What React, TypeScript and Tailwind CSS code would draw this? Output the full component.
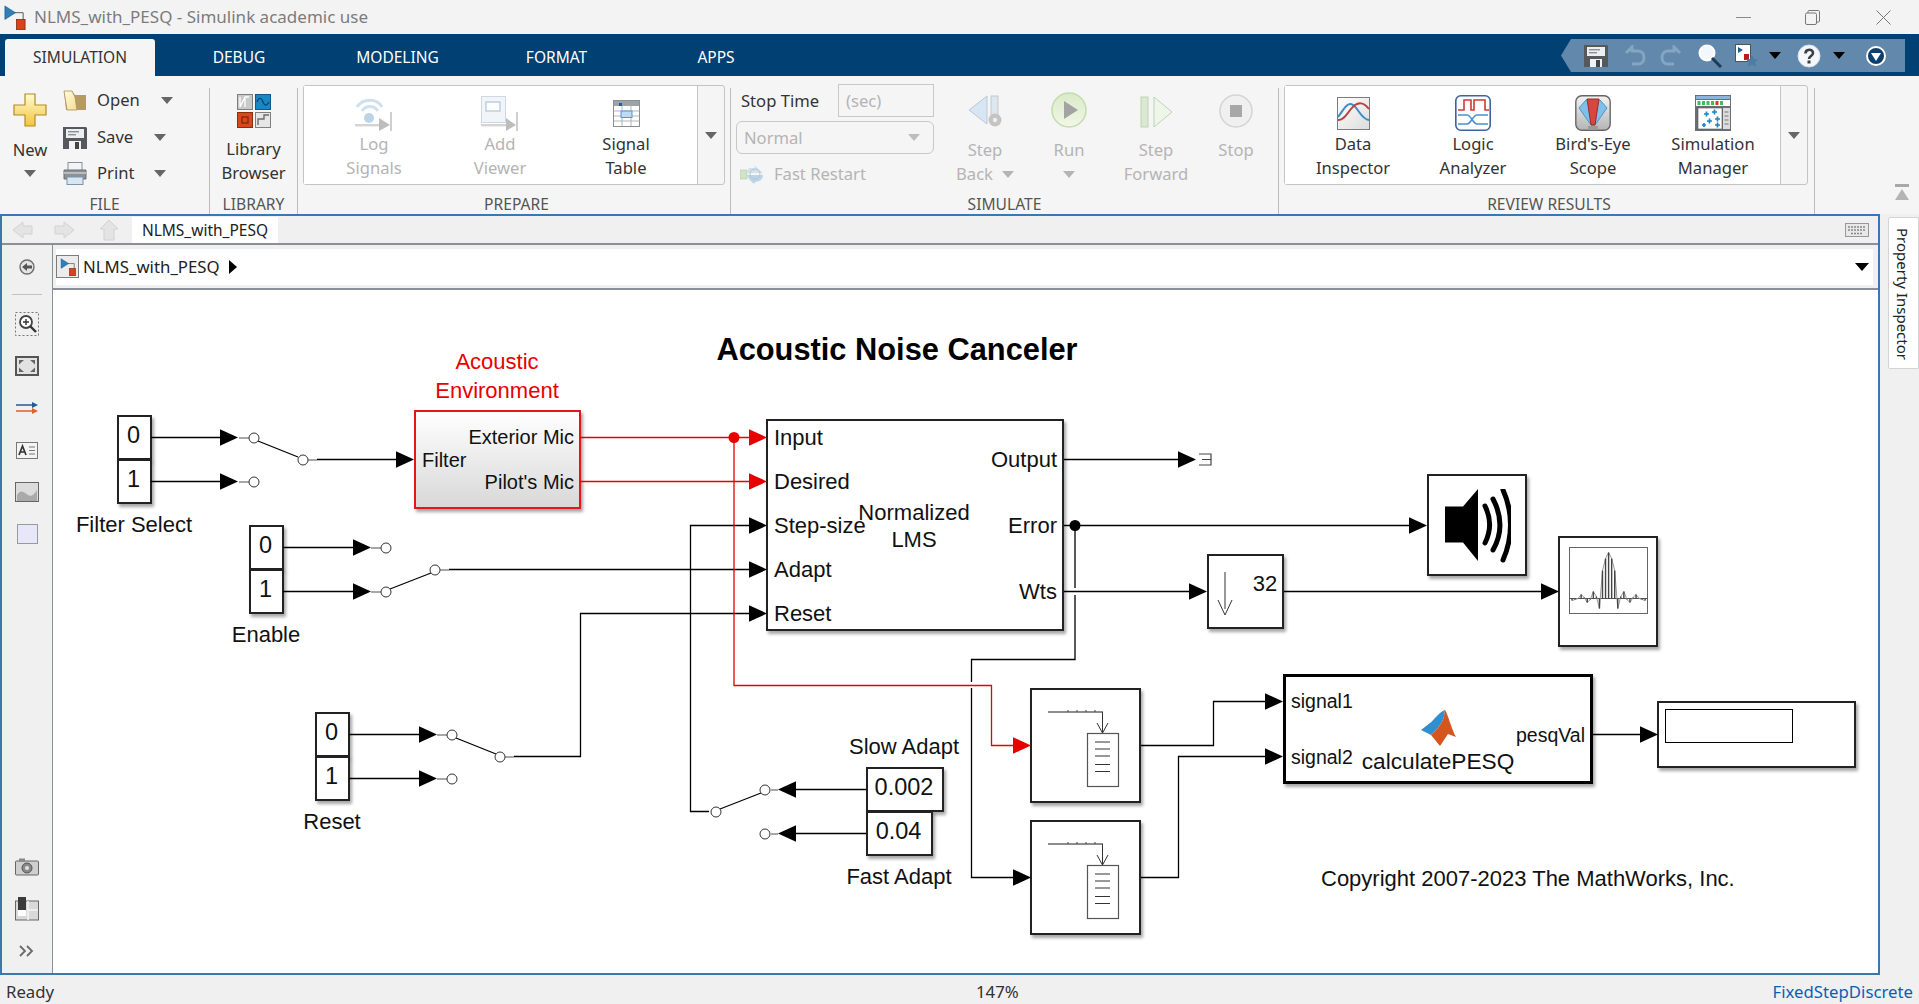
import type { ReactNode } from "react";

// little triangle used on all the ribbon drop downs
function Caret({ className = "" }: { className?: string }) {
  return (
    <svg width="12" height="7" viewBox="0 0 12 7" className={className}>
      <path d="M0 0h12L6 7z" fill="currentColor" />
    </svg>
  );
}

function ModelIcon({ size = 24 }: { size?: number }) {
  return (
    <svg width={size} height={size} viewBox="0 0 24 26">
      <path d="M8 8 L21 8 L21 18" fill="none" stroke="#555" strokeWidth="1" />
      <path d="M2 1 L13 8 L2 15 z" fill="#2f7fb8" stroke="#14507c" strokeWidth="0.6" />
      <rect x="14" y="15" width="9" height="11" fill="#d9421d" stroke="#7c2710" strokeWidth="0.8" />
    </svg>
  );
}

function NewIcon() {
  return (
    <svg width="34" height="34" viewBox="0 0 34 34">
      <defs>
        <linearGradient id="plusFill" x1="0" y1="0" x2="0" y2="1">
          <stop offset="0" stopColor="#fffbd0" />
          <stop offset="1" stopColor="#f2c53d" />
        </linearGradient>
      </defs>
      <path d="M12 1h10v11h11v10H22v11H12V22H1V12h11z" fill="url(#plusFill)" stroke="#b08b2c" strokeWidth="1.2" />
    </svg>
  );
}

function FolderIcon() {
  return (
    <svg width="24" height="21" viewBox="0 0 24 21">
      <defs>
        <linearGradient id="folderFill" x1="0" y1="0" x2="1" y2="1">
          <stop offset="0" stopColor="#fffde0" />
          <stop offset="1" stopColor="#f3dc90" />
        </linearGradient>
      </defs>
      <path d="M1 1h8l3 4h11v15H3z" fill="#b59a63" />
      <path d="M1 1h8l3 6 2 13H4z" fill="url(#folderFill)" stroke="#a98f5a" strokeWidth="0.8" />
    </svg>
  );
}

function FloppyIcon({ w = 24, h = 23 }: { w?: number; h?: number }) {
  return (
    <svg width={w} height={h} viewBox="0 0 24 23">
      <path d="M0 1h23l1 1v21H0z" fill="#55585c" />
      <rect x="3" y="3" width="18" height="9" fill="#eceff2" />
      <rect x="5" y="5" width="11" height="1.4" fill="#8c9096" />
      <rect x="5" y="8" width="8" height="1.4" fill="#8c9096" />
      <rect x="6" y="15" width="12" height="8" fill="#f2f2f2" />
      <rect x="12" y="16" width="4" height="7" fill="#444" />
    </svg>
  );
}

function PrinterIcon() {
  return (
    <svg width="24" height="23" viewBox="0 0 24 23">
      <rect x="5" y="0.5" width="14" height="8" fill="#f2f4f6" stroke="#8a8f95" />
      <path d="M1 8h22v9H1z" fill="#8b9197" stroke="#6c7176" />
      <rect x="1" y="10" width="22" height="2" fill="#b7bcc1" />
      <rect x="4" y="15" width="16" height="7.5" fill="#d7e6f2" stroke="#7d95a8" />
    </svg>
  );
}

function LibraryIcon() {
  return (
    <svg width="34" height="34" viewBox="0 0 34 34">
      <rect x="0.5" y="0.5" width="15" height="15" fill="#c9c9c9" stroke="#7f7f7f" />
      <path d="M3 13V3M3 13l5-10M8 13V3l4 0" fill="none" stroke="#fff" strokeWidth="1.3" />
      <rect x="18.5" y="0.5" width="15" height="15" fill="#1b86c4" stroke="#11598a" />
      <path d="M20 8c2-5 4-5 6 0s4 3 6 0" fill="none" stroke="#0a3f63" strokeWidth="1.2" />
      <rect x="0.5" y="18.5" width="15" height="15" fill="#d8481c" stroke="#8e2c0e" />
      <rect x="5" y="23" width="6" height="6" fill="none" stroke="#7d2408" strokeWidth="1.2" />
      <rect x="18.5" y="18.5" width="15" height="15" fill="#e6e6e6" stroke="#7f7f7f" />
      <path d="M21 31v-6h6v-4h5" fill="none" stroke="#6c6c6c" strokeWidth="1.4" />
    </svg>
  );
}

function LogSignalsIcon() {
  return (
    <svg width="38" height="35" viewBox="0 0 38 35">
      <path d="M2 11C8 2 22 2 27 11" fill="none" stroke="#cfe0ee" strokeWidth="3" />
      <path d="M7 15C11 9 19 9 23 15" fill="none" stroke="#cfe0ee" strokeWidth="3" />
      <circle cx="14" cy="22" r="5" fill="#bcd4e8" />
      <rect x="0" y="28" width="26" height="2.4" fill="#d4d4d4" />
      <path d="M24 22l11 7-11 6z" fill="#bdbdbd" />
      <rect x="35" y="16" width="2" height="19" fill="#cfcfcf" />
    </svg>
  );
}

function AddViewerIcon() {
  return (
    <svg width="38" height="35" viewBox="0 0 38 35">
      <rect x="0.5" y="0.5" width="24" height="26" fill="#f1f5f9" stroke="#cfd8e0" />
      <rect x="5" y="6" width="14" height="9" fill="#fff" stroke="#b8cde0" strokeWidth="1.4" />
      <rect x="0" y="28" width="26" height="2.4" fill="#d4d4d4" />
      <path d="M25 22l10 7-10 6z" fill="#bdbdbd" />
      <rect x="35" y="16" width="2" height="19" fill="#cfcfcf" />
    </svg>
  );
}

function SignalTableIcon() {
  return (
    <svg width="27" height="27" viewBox="0 0 27 27">
      <rect x="0.5" y="0.5" width="26" height="26" fill="#fff" stroke="#8b8f94" />
      <rect x="1" y="1" width="25" height="5" fill="#9ea3a8" />
      <rect x="6" y="3" width="3" height="3" fill="#1a5fa8" />
      <path d="M1 11h25M1 16h25M1 21h25M9 6v20M18 6v20" stroke="#a9adb2" strokeWidth="0.9" />
      <rect x="8" y="11" width="11" height="6.5" fill="#bcd9f5" stroke="#5c94cc" />
    </svg>
  );
}

function FastRestartIcon() {
  return (
    <svg width="24" height="20" viewBox="0 0 24 20">
      <rect x="0" y="6" width="7" height="9" fill="#cfe3c8" stroke="#b7c9b1" strokeWidth="0.6" />
      <path d="M9 4h6l-1-3 9 8H7z" fill="#cfe0ee" />
      <path d="M7 11h16c0 6-6 7-8 7l-1 2-5-5z" fill="#bcd4e8" />
      <circle cx="15" cy="10" r="5" fill="none" stroke="#b8c4cd" strokeWidth="1" />
    </svg>
  );
}

function StepBackIcon() {
  return (
    <svg width="35" height="33" viewBox="0 0 35 33">
      <path d="M19 1v28L1 15z" fill="#d7e6f2" stroke="#b9c9d6" />
      <rect x="23" y="1" width="7" height="26" fill="#dfe7ee" stroke="#c2c9d0" />
      <circle cx="27" cy="25" r="6.5" fill="#c4c4c4" />
      <circle cx="27" cy="25" r="2.2" fill="#efefef" />
    </svg>
  );
}

function RunIcon() {
  return (
    <svg width="36" height="36" viewBox="0 0 36 36">
      <defs>
        <linearGradient id="runFill" x1="0" y1="0" x2="0" y2="1">
          <stop offset="0" stopColor="#d9eac8" />
          <stop offset="1" stopColor="#f1f7e8" />
        </linearGradient>
      </defs>
      <circle cx="18" cy="18" r="17" fill="url(#runFill)" stroke="#c4dcb0" strokeWidth="1.5" />
      <path d="M13 9l14 9-14 9z" fill="#a3a3a3" />
    </svg>
  );
}

function StepForwardIcon() {
  return (
    <svg width="33" height="33" viewBox="0 0 33 33">
      <rect x="1" y="2" width="7" height="30" fill="#dbe9d3" stroke="#bfd2b4" />
      <path d="M14 2v30l18-15z" fill="#eef5e9" stroke="#bfd2b4" />
    </svg>
  );
}

function StopIcon() {
  return (
    <svg width="34" height="34" viewBox="0 0 34 34">
      <circle cx="17" cy="17" r="16" fill="#f0f0f0" stroke="#d4d4d4" strokeWidth="1.5" />
      <rect x="11" y="11" width="12" height="12" fill="#a8a8a8" />
    </svg>
  );
}

function DataInspectorIcon() {
  return (
    <svg width="33" height="33" viewBox="0 0 33 33">
      <defs>
        <linearGradient id="sdiFill" x1="0" y1="0" x2="1" y2="1">
          <stop offset="0" stopColor="#ffffff" />
          <stop offset="1" stopColor="#dcdcdc" />
        </linearGradient>
      </defs>
      <rect x="0.5" y="0.5" width="32" height="32" fill="url(#sdiFill)" stroke="#7d7d7d" />
      <path d="M1 20C6 14 10 4 16 8s8 14 16 15" fill="none" stroke="#3d8ccc" strokeWidth="2" />
      <path d="M1 23C8 24 12 12 18 8s10-1 14 4" fill="none" stroke="#b9413b" strokeWidth="2" />
    </svg>
  );
}

function LogicAnalyzerIcon() {
  return (
    <svg width="36" height="36" viewBox="0 0 36 36">
      <rect x="0.8" y="0.8" width="34.4" height="34.4" rx="5" fill="#fff" stroke="#3b659a" strokeWidth="1.6" />
      <path d="M3 15h6V5h7v10h3V5h11v10h4" fill="none" stroke="#cf3a34" strokeWidth="1.6" />
      <path d="M3 20h9c4 0 6 9 10 9h11M3 29h9c4 0 6-9 10-9h11" fill="none" stroke="#4a90cf" strokeWidth="1.6" />
    </svg>
  );
}

function BirdsEyeIcon() {
  return (
    <svg width="36" height="36" viewBox="0 0 36 36">
      <defs>
        <linearGradient id="beFill" x1="0" y1="0" x2="0" y2="1">
          <stop offset="0" stopColor="#f2f2f2" />
          <stop offset="1" stopColor="#b5b5b5" />
        </linearGradient>
      </defs>
      <rect x="0.8" y="0.8" width="34.4" height="34.4" rx="6" fill="url(#beFill)" stroke="#666" strokeWidth="1.4" />
      <path d="M4 13L11 5 25 5 32 13 20 30H16z" fill="#7fc0ea" stroke="#4f93c4" />
      <path d="M12 4h12l-4 26h-4z" fill="#d5473f" stroke="#9a2c27" />
      <path d="M13 31h10v4H13z" fill="#9b9b9b" />
    </svg>
  );
}

function SimManagerIcon() {
  return (
    <svg width="36" height="36" viewBox="0 0 36 36">
      <rect x="0" y="0" width="36" height="36" fill="#6b6f74" />
      <rect x="1" y="1" width="34" height="3" fill="#8db3d6" />
      <rect x="1" y="5" width="34" height="6" fill="#fff" />
      <g fill="#3fc04d">
        <rect x="2.5" y="6" width="3" height="4" />
        <rect x="7" y="6" width="3" height="4" />
        <rect x="11.5" y="6" width="3" height="4" />
        <rect x="16" y="6" width="3" height="4" />
        <rect x="25" y="6" width="3" height="4" />
      </g>
      <rect x="20.5" y="6" width="3" height="4" fill="#e2332b" />
      <rect x="3" y="13" width="24" height="21" fill="#fff" stroke="#555" strokeWidth="0.6" />
      <rect x="28" y="13" width="7" height="21" fill="#dcdcdc" />
      <path d="M9 19h5M11.500 16.500v5M17 17h5M19.500 14.500v5M12 26h5M14.500 23.500v5M20 24h5M22.500 21.500v5M7 30h4M9 28v4M20 30h5M22.500 27.500v5" stroke="#1b86c4" strokeWidth="1.7" />
      <path d="M29.500 17h4M29.500 21h4M29.500 25h4M29.500 29h4" stroke="#777" strokeWidth="1.2" />
    </svg>
  );
}

function MagnifierIcon() {
  return (
    <svg width="24" height="24" viewBox="0 0 24 24">
      <circle cx="9" cy="9" r="7.500" fill="#f3f8fc" stroke="#fff" strokeWidth="2" />
      <path d="M14 14l9 9" stroke="#1d3a57" strokeWidth="3" />
    </svg>
  );
}

function RibbonButton({ icon, lines, disabled, tall }: { icon: ReactNode; lines: ReactNode[]; disabled?: boolean; tall?: boolean }) {
  return (
    <div className={`flex flex-col items-center ${disabled ? "text-[#b4b4b4]" : "text-[#333333]"}`}>
      <div className={`${tall ? "mt-[8px]" : "mt-[9px]"} flex h-[36px] items-center justify-center`}>{icon}</div>
      <div className={`${tall ? "mt-[8px]" : "mt-[1px]"} text-center text-[16.600px] leading-[24px] whitespace-nowrap`}>
        {lines.map((l, i) => (
          <div key={i}>{l}</div>
        ))}
      </div>
    </div>
  );
}

function GroupLabel({ children }: { children: ReactNode }) {
  return <div className="flex h-[29px] items-center justify-center pt-[10px] text-[15.600px] text-[#555555]">{children}</div>;
}

function Sep() {
  return <div className="mt-[3px] w-px bg-[#bcbcbc]" />;
}

function Ribbon() {
  return (
    <div className="flex h-[138px] bg-[#f5f5f5] pt-[9px]">
      {/* File */}
      <div className="w-[209px]">
        <div className="flex h-[100px] text-[#333333]">
          <div className="flex w-[60px] flex-col items-center">
            <div className="mt-[8px]"><NewIcon /></div>
            <div className="mt-[11px] text-[16.600px] leading-[24px]">New</div>
            <Caret className="mt-[8px] text-[#666666]" />
          </div>
          <div className="flex w-[149px] flex-col pl-[3px] text-[16.600px] leading-[24px]">
            <div className="mt-[3px] flex h-[24px] items-center">
              <FolderIcon />
              <span className="ml-[10px] w-[64px]">Open</span>
              <Caret className="text-[#666666]" />
            </div>
            <div className="mt-[13px] flex h-[24px] items-center">
              <FloppyIcon />
              <span className="ml-[10px] w-[57px]">Save</span>
              <Caret className="text-[#666666]" />
            </div>
            <div className="mt-[12px] flex h-[24px] items-center">
              <PrinterIcon />
              <span className="ml-[10px] w-[57px]">Print</span>
              <Caret className="text-[#666666]" />
            </div>
          </div>
        </div>
        <GroupLabel>FILE</GroupLabel>
      </div>
      <Sep />
      {/* Library */}
      <div className="w-[87px]">
        <div className="h-[100px]">
          <RibbonButton tall icon={<LibraryIcon />} lines={["Library", "Browser"]} />
        </div>
        <GroupLabel>LIBRARY</GroupLabel>
      </div>
      <Sep />
      {/* Prepare */}
      <div className="w-[432px] pl-[5px]">
        <div className="flex h-[100px] w-[422px] rounded-[3px] border border-[#c4c4c4]">
          <div className="flex flex-1 bg-white pl-[7px]">
            <div className="w-[126px]"><RibbonButton disabled icon={<LogSignalsIcon />} lines={["Log", "Signals"]} /></div>
            <div className="w-[126px]"><RibbonButton disabled icon={<AddViewerIcon />} lines={["Add", "Viewer"]} /></div>
            <div className="w-[126px]"><RibbonButton icon={<SignalTableIcon />} lines={["Signal", "Table"]} /></div>
          </div>
          <div className="flex w-[27px] items-center justify-center border-l border-[#c4c4c4] text-[#666666]"><Caret /></div>
        </div>
        <GroupLabel>PREPARE</GroupLabel>
      </div>
      <Sep />
      {/* Simulate */}
      <div className="w-[547px]">
        <div className="flex h-[100px] pl-[5px]">
          <div className="w-[198px] text-[16.600px] leading-[24px] text-[#b4b4b4]">
            <div className="mt-[-1px] flex h-[33px] items-center justify-between">
              <span className="pl-[5px] text-[#333333]">Stop Time</span>
              <div className="h-[33px] w-[96px] border border-[#c8c8c8] pl-[7px] leading-[31px]">(sec)</div>
            </div>
            <div className="mt-[4px] flex h-[33px] items-center justify-between rounded-[6px] border border-[#c8c8c8] pr-[13px] pl-[7px]">
              Normal
              <Caret className="text-[#bdbdbd]" />
            </div>
            <div className="mt-[8px] flex h-[24px] items-center pl-[4px]">
              <FastRestartIcon />
              <span className="ml-[10px]">Fast Restart</span>
            </div>
          </div>
          <div className="w-[6px]" />
          <div className="w-[90px]">
            <div className="flex flex-col items-center text-[#b4b4b4]">
              <div className="mt-[10px] flex h-[33px] items-center"><StepBackIcon /></div>
              <div className="mt-[10px] text-center text-[16.600px] leading-[24px]">
                <div>Step</div>
                <div className="flex items-center">
                  Back
                  <Caret className="ml-[9px] text-[#b4b4b4]" />
                </div>
              </div>
            </div>
          </div>
          <div className="w-[78px]">
            <div className="flex flex-col items-center text-[#b4b4b4]">
              <div className="mt-[7px] flex h-[36px] items-center"><RunIcon /></div>
              <div className="mt-[10px] text-center text-[16.600px] leading-[24px]">Run</div>
              <Caret className="mt-[9px]" />
            </div>
          </div>
          <div className="w-[96px]">
            <div className="flex flex-col items-center text-[#b4b4b4]">
              <div className="mt-[10px] flex h-[33px] items-center"><StepForwardIcon /></div>
              <div className="mt-[10px] text-center text-[16.600px] leading-[24px]">
                <div>Step</div>
                <div>Forward</div>
              </div>
            </div>
          </div>
          <div className="w-[64px]">
            <div className="flex flex-col items-center text-[#b4b4b4]">
              <div className="mt-[8px] flex h-[35px] items-center"><StopIcon /></div>
              <div className="mt-[10px] text-[16.600px] leading-[24px]">Stop</div>
            </div>
          </div>
        </div>
        <GroupLabel>SIMULATE</GroupLabel>
      </div>
      <Sep />
      {/* Review results */}
      <div className="w-[535px] pl-[5px]">
        <div className="flex h-[100px] w-[524px] rounded-[3px] border border-[#c4c4c4]">
          <div className="flex flex-1 bg-white pl-[8px]">
            <div className="w-[120px]"><RibbonButton icon={<DataInspectorIcon />} lines={["Data", "Inspector"]} /></div>
            <div className="w-[120px]"><RibbonButton icon={<LogicAnalyzerIcon />} lines={["Logic", "Analyzer"]} /></div>
            <div className="w-[120px]"><RibbonButton icon={<BirdsEyeIcon />} lines={["Bird's-Eye", "Scope"]} /></div>
            <div className="w-[120px]"><RibbonButton icon={<SimManagerIcon />} lines={["Simulation", "Manager"]} /></div>
          </div>
          <div className="flex w-[27px] items-center justify-center border-l border-[#c4c4c4] text-[#666666]"><Caret /></div>
        </div>
        <GroupLabel>REVIEW RESULTS</GroupLabel>
      </div>
      <Sep />
      <div className="flex flex-1 justify-end pt-[99px] pr-[10px]">
        <svg width="14" height="17" viewBox="0 0 14 17">
          <rect x="0" y="0" width="14" height="3" fill="#a8a8a8" />
          <path d="M7 5l7 11H0z" fill="#b4b4b4" />
        </svg>
      </div>
    </div>
  );
}

function QuickAccess() {
  return (
    <div className="mt-[5px] mr-[14px] ml-auto flex h-[33px] w-[344px] items-center bg-[#6288ab] [clip-path:polygon(10px_0,100%_0,100%_100%,10px_100%,0_50%)]">
      <div className="ml-[23px]"><FloppyIcon /></div>
      <svg width="22" height="22" viewBox="0 0 22 22" className="ml-[16px]">
        <path d="M2 8l6-6v4h6c8 0 8 13 0 13H8" fill="none" stroke="#84a6c4" strokeWidth="3" />
      </svg>
      <svg width="22" height="22" viewBox="0 0 22 22" className="ml-[14px]">
        <path d="M20 8l-6-6v4H8C0 6 0 19 8 19h6" fill="none" stroke="#84a6c4" strokeWidth="3" />
      </svg>
      <div className="ml-[16px]"><MagnifierIcon /></div>
      <svg width="24" height="24" viewBox="0 0 24 24" className="ml-[13px]">
        <rect x="0.500" y="0.500" width="15" height="17" fill="#fff" stroke="#4c5560" />
        <path d="M3 3l5 3-5 3z" fill="#1b5e92" />
        <rect x="9" y="10" width="5" height="6" fill="#b5201a" />
        <path d="M17 11l2 4 4 .5-3 3 1 4.500-4-2.500-4 2.500 1-4.500-3-3 4-.5z" fill="#4f7ca4" />
      </svg>
      <Caret className="ml-[10px] text-black" />
      <svg width="24" height="24" viewBox="0 0 24 24" className="ml-[16px]">
        <circle cx="12" cy="12" r="11" fill="#f5f8fb" stroke="#d4e0ea" />
        <path d="M8.500 9.500c0-5 7.500-5 7.500-.5 0 3-4 3-4 6" fill="none" stroke="#3b3f46" strokeWidth="2.600" />
        <rect x="10.500" y="16.500" width="3" height="3" fill="#3b3f46" />
      </svg>
      <Caret className="ml-[12px] text-black" />
      <svg width="20" height="20" viewBox="0 0 20 20" className="ml-[21px]">
        <circle cx="10" cy="10" r="9" fill="#0b3f6f" stroke="#fff" strokeWidth="2" />
        <path d="M5 7h10l-5 8z" fill="#fff" />
      </svg>
    </div>
  );
}

function SideSlot({ children }: { children: ReactNode }) {
  return <div className="flex h-[42px] items-center justify-center">{children}</div>;
}

function Sidebar() {
  return (
    <div className="flex w-[51px] flex-col border-r border-[#8a8f99]">
      <div className="flex h-[43px] items-center justify-center">
        <svg width="16" height="16" viewBox="0 0 16 16">
          <circle cx="8" cy="8" r="7" fill="#e4e4e4" stroke="#6d6d6d" strokeWidth="1.4" />
          <path d="M3 8l5-4v2.500h5v3H8V12z" fill="#555555" />
        </svg>
      </div>
      <div className="mx-auto mt-[6px] mb-[8px] h-px w-[30px] bg-[#c2c2c2]" />
      <SideSlot>
        <svg width="24" height="24" viewBox="0 0 24 24">
          <rect x="0.500" y="0.500" width="23" height="23" fill="none" stroke="#777" strokeDasharray="2 2" />
          <circle cx="11" cy="10" r="6" fill="#fff" stroke="#444" strokeWidth="1.8" />
          <path d="M8 10h6M11 7v6" stroke="#333" strokeWidth="1.4" />
          <path d="M15 14l6 6" stroke="#333" strokeWidth="2.400" />
        </svg>
      </SideSlot>
      <SideSlot>
        <svg width="24" height="20" viewBox="0 0 24 20">
          <rect x="1" y="1" width="22" height="18" fill="#e2e2e2" stroke="#555" strokeWidth="2" />
          <path d="M4 4h5L4 8.500zM20 4h-5l5 4.500zM4 16h5l-5-4.500zM20 16h-5l5-4.500z" fill="#666" />
        </svg>
      </SideSlot>
      <SideSlot>
        <svg width="22" height="12" viewBox="0 0 22 12">
          <path d="M0 3h17" stroke="#1f5c94" strokeWidth="1.500" />
          <path d="M16 0l6 3-6 3z" fill="#1f5c94" />
          <path d="M0 9h17" stroke="#d9652c" strokeWidth="1.500" />
          <path d="M16 6l6 3-6 3z" fill="#d9652c" />
        </svg>
      </SideSlot>
      <SideSlot>
        <svg width="22" height="17" viewBox="0 0 22 17">
          <rect x="0.500" y="0.500" width="21" height="16" fill="#f4f4f4" stroke="#777" />
          <path d="M3 13l3.500-9 3.500 9M4.500 10h4" fill="none" stroke="#333" strokeWidth="1.700" />
          <path d="M13 5h6M13 8.500h6M13 12h6" stroke="#777" />
        </svg>
      </SideSlot>
      <SideSlot>
        <svg width="24" height="20" viewBox="0 0 24 20">
          <rect x="0.500" y="0.500" width="23" height="19" fill="#dcdcdc" stroke="#666" />
          <path d="M2 13c4-7 8-2 11 0s6 0 9-5v11H2z" fill="#aaaaaa" />
        </svg>
      </SideSlot>
      <SideSlot>
        <div className="h-[20px] w-[21px] border border-[#9a9a9a] bg-[#e6e8fa]" />
      </SideSlot>
      <div className="mt-auto mb-px">
        <SideSlot>
          <svg width="24" height="18" viewBox="0 0 24 18">
            <rect x="0.500" y="3" width="23" height="14" rx="1" fill="#cfcfcf" stroke="#666" />
            <rect x="4" y="0.500" width="6" height="3" fill="#888" />
            <circle cx="12" cy="10" r="5" fill="#8a8a8a" stroke="#555" />
            <circle cx="12" cy="10" r="2" fill="#e2e2e2" />
          </svg>
        </SideSlot>
        <SideSlot>
          <svg width="24" height="24" viewBox="0 0 24 24">
            <rect x="0.500" y="4" width="23" height="19" fill="#d9d9d9" stroke="#666" />
            <path d="M13 13h10M13 4v19" stroke="#f3f3f3" strokeWidth="1.500" />
            <path d="M3 0h8v13H3z" fill="#3a3a3a" />
            <rect x="3" y="13" width="8" height="6" fill="#fff" />
          </svg>
        </SideSlot>
        <SideSlot>
          <svg width="16" height="12" viewBox="0 0 16 12">
            <path d="M1 1l5 5-5 5M8 1l5 5-5 5" fill="none" stroke="#6a6a6a" strokeWidth="1.800" />
          </svg>
        </SideSlot>
      </div>
    </div>
  );
}

function Arrow({ x, y, red, left }: { x: number; y: number; red?: boolean; left?: boolean }) {
  // x is the tip of the arrow head
  const base = left ? x + 18 : x - 18;
  return <path d={`M${x} ${y}L${base} ${y - 8.3}V${y + 8.3}z`} fill={red ? "#e60000" : "#000"} />;
}

function Port({ x, y }: { x: number; y: number }) {
  return <circle cx={x} cy={y} r="5" fill="#fff" stroke="#333" strokeWidth="1" />;
}

const blackWires = [
  "151,437.500 222,437.500",
  "151,481.500 222,481.500",
  "258,441 298,457",
  "317,459.500 398,459.500",
  "283,547.500 354,547.500",
  "283,591.500 354,591.500",
  "390,589 431,573",
  "449,569.500 750,569.500",
  "349,734.500 420,734.500",
  "349,778.500 420,778.500",
  "456,738 496,754",
  "514,756.500 580.500,756.500 580.500,613.500 750,613.500",
  "750,525.500 690.500,525.500 690.500,811.500 709,811.500",
  "720,809 761,793",
  "796,789.500 866,789.500",
  "796,833.500 866,833.500",
  "1064,459.500 1179,459.500",
  "1064,525.500 1410,525.500",
  "1075,525.500 1075,588",
  "1075,595 1075,659.500 971.500,659.500 971.500,682",
  "971.500,688 971.500,877.500 1014,877.500",
  "1064,591.500 1190,591.500",
  "1284,591.500 1542,591.500",
  "1141,745.500 1213.500,745.500 1213.500,701.500 1266,701.500",
  "1141,877.500 1178.500,877.500 1178.500,756.500 1266,756.500",
  "1592,734.500 1641,734.500",
];

const stubs = [
  "239,438 249,438",
  "239,482 249,482",
  "308,460 317,460",
  "371,548 381,548",
  "371,592 381,592",
  "440,570 449,570",
  "437,735 447,735",
  "437,779 447,779",
  "505,757 514,757",
  "771,790 778,790",
  "771,834 778,834",
];

const ports: [number, number][] = [
  [254, 438], [254, 482], [303, 460],
  [386, 548], [386, 592], [435, 570],
  [452, 735], [452, 779], [500, 757],
  [716, 812], [765, 790], [765, 834],
];

function Wires() {
  return (
    <svg className="absolute inset-0 h-[683px] w-[1825px]" viewBox="53 290 1825 683">
      {blackWires.map((p) => (
        <polyline key={p} points={p} fill="none" stroke="#000" strokeWidth="1.300" />
      ))}
      {stubs.map((p) => (
        <polyline key={p} points={p} fill="none" stroke="#777" strokeWidth="1.300" />
      ))}
      <g fill="none" stroke="#e60000" strokeWidth="1.300">
        <polyline points="580,437.500 750,437.500" />
        <polyline points="580,481.500 750,481.500" />
        <polyline points="734,437.500 734,685.500 991.500,685.500 991.500,745.500 1014,745.500" />
      </g>
      <circle cx="734" cy="437.500" r="5.500" fill="#e60000" />
      <circle cx="1075" cy="525.500" r="5.500" fill="#000" />
      {ports.map(([x, y]) => (
        <Port key={`${x}-${y}`} x={x} y={y} />
      ))}
      <Arrow x={238} y={437.5} />
      <Arrow x={238} y={481.5} />
      <Arrow x={414} y={459.5} />
      <Arrow x={371} y={547.5} />
      <Arrow x={371} y={591.5} />
      <Arrow x={437} y={734.5} />
      <Arrow x={437} y={778.5} />
      <Arrow x={767} y={437.5} red />
      <Arrow x={767} y={481.5} red />
      <Arrow x={767} y={525.5} />
      <Arrow x={767} y={569.5} />
      <Arrow x={767} y={613.5} />
      <Arrow x={778} y={789.5} left />
      <Arrow x={778} y={833.5} left />
      <Arrow x={1196} y={459.5} />
      <Arrow x={1427} y={525.5} />
      <Arrow x={1207} y={591.5} />
      <Arrow x={1559} y={591.5} />
      <Arrow x={1031} y={745.5} red />
      <Arrow x={1031} y={877.5} />
      <Arrow x={1283} y={701.5} />
      <Arrow x={1283} y={756.5} />
      <Arrow x={1658} y={734.5} />
      {/* terminator */}
      <path d="M1199 454h12v11h-12M1202 459.500h9" fill="none" stroke="#444" strokeWidth="1.200" />
    </svg>
  );
}

function BufferGlyph() {
  return (
    <svg width="110" height="115" viewBox="0 0 110 115" className="absolute top-[-1px] left-[-1px]">
      <path d="M17 23h55" stroke="#666" strokeWidth="1.600" />
      <path d="M37 23v-2M46 23v-2M55 23v-2M64 23v-2" stroke="#444" strokeWidth="1" />
      <path d="M71.500 23v21M66 34l5.500 10 5.500-10" fill="none" stroke="#333" strokeWidth="1" />
      <rect x="56.500" y="44.500" width="31" height="53" fill="#fff" stroke="#555" strokeWidth="1.200" />
      <path d="M64 53h15M64 60h15M64 67h15M64 75.500h15M64 82.500h15" stroke="#333" strokeWidth="1" />
    </svg>
  );
}

function Scope() {
  // sinc like stems, values are heights above the base line
  const stems = [-2, -1, 0, 4, 1, -4, -1, 7, 2, -10, 28, 40, 46, 40, 28, -10, 2, 7, -1, -4, 1, 4, 0, -1, -2];
  const tips = stems.map((v, i) => `${3 + i * 3.05},${51.5 - v}`).join(" ");
  return (
    <svg width="79" height="67" viewBox="0 0 79 67" className="absolute top-[9px] left-[9px]">
      <rect x="0.500" y="0.500" width="78" height="66" fill="#fff" stroke="#666" strokeWidth="1" />
      <path d="M0 51.500h79" stroke="#555" strokeWidth="1" />
      <polyline points={tips} fill="none" stroke="#999" strokeWidth="1" />
      {stems.map((v, i) => (
        <path key={i} d={`M${3 + i * 3.05} 51.500V${51.5 - v}`} stroke="#444" strokeWidth="1.400" />
      ))}
    </svg>
  );
}

function Label({ className, children }: { className: string; children: ReactNode }) {
  return <div className={`absolute leading-none whitespace-nowrap ${className}`}>{children}</div>;
}

const blockCls = "absolute border-2 border-[#222222] bg-white shadow-[2px_3px_3px_rgba(0,0,0,0.35)]";
const valueCls = "flex items-center justify-center pr-[2px] pb-[3px] text-[23.500px]";

function Diagram() {
  return (
    <div className="relative h-[683px] w-[1825px] overflow-hidden bg-white font-['Liberation_Sans',Arial,sans-serif] text-[22px] text-[#111111]">
      <div className={`${blockCls} ${valueCls} top-[125px] left-[64px] h-[45px] w-[35px]`}>0</div>
      <div className={`${blockCls} ${valueCls} top-[169px] left-[64px] h-[45px] w-[35px]`}>1</div>
      <div className={`${blockCls} ${valueCls} top-[235px] left-[196px] h-[45px] w-[35px]`}>0</div>
      <div className={`${blockCls} ${valueCls} top-[279px] left-[196px] h-[45px] w-[35px]`}>1</div>
      <div className={`${blockCls} ${valueCls} top-[422px] left-[262px] h-[45px] w-[35px]`}>0</div>
      <div className={`${blockCls} ${valueCls} top-[466px] left-[262px] h-[45px] w-[35px]`}>1</div>
      <div className={`${blockCls} ${valueCls} top-[477px] left-[813px] h-[45px] w-[78px]`}>0.002</div>
      <div className={`${blockCls} ${valueCls} top-[521px] left-[813px] h-[45px] w-[67px]`}>0.04</div>

      <div className="absolute top-[120px] left-[361px] h-[99px] w-[167px] border-2 border-[#e8141c] bg-gradient-to-b from-white to-[#d8d8d8] shadow-[2px_3px_3px_rgba(0,0,0,0.35)]" />
      <div className={`${blockCls} top-[129px] left-[713px] h-[212px] w-[298px]`} />
      <div className={`${blockCls} top-[264px] left-[1154px] h-[75px] w-[77px]`}>
        <svg width="30" height="45" viewBox="0 0 30 45" className="absolute top-[15px] left-[-1px]">
          <path d="M17 1v37M10 29l7 15 7-15" fill="none" stroke="#333" strokeWidth="1" />
        </svg>
      </div>
      <div className={`${blockCls} top-[184px] left-[1374px] h-[102px] w-[100px]`}>
        <svg width="66" height="74" viewBox="0 0 66 74" className="absolute top-[13px] left-[16px]">
          <path d="M0 17.500h18L33 0v72L18 53.500H0z" fill="#000" />
          <g fill="none" stroke="#000" strokeLinecap="round">
            <path d="M40 17c6 12 6 25 0 37" strokeWidth="5" />
            <path d="M48 10c9 17 9 35 0 51" strokeWidth="5" />
            <path d="M58 1c10 22 10 47 0 70" strokeWidth="5" />
          </g>
        </svg>
      </div>
      <div className={`${blockCls} top-[246px] left-[1505px] h-[111px] w-[100px]`}><Scope /></div>
      <div className={`${blockCls} top-[398px] left-[977px] h-[115px] w-[111px]`}><BufferGlyph /></div>
      <div className={`${blockCls} top-[530px] left-[977px] h-[115px] w-[111px]`}><BufferGlyph /></div>
      <div className={`absolute top-[384px] left-[1230px] h-[110px] w-[310px] border-[3.500px] border-black bg-white shadow-[2px_3px_3px_rgba(0,0,0,0.35)]`}>
        <svg width="36" height="36" viewBox="0 0 36 36" className="absolute top-[33px] left-[134px]">
          <path d="M1 20L10 13C14 10 19 2 25 0c-1 9-3 13-8 19L11 25z" fill="#2f8fd0" />
          <path d="M25 0c3 4 6 18 11 27l-8-3-8 12L11 25l6-6c5-6 7-10 8-19z" fill="#d4561c" />
        </svg>
      </div>
      <div className={`${blockCls} top-[411px] left-[1604px] h-[67px] w-[199px]`}>
        <div className="mt-[6px] ml-[6px] h-[34px] w-[128px] border border-black" />
      </div>

      <Wires />

      <Label className="top-[60px] left-[844px] -translate-x-1/2 -translate-y-1/2 text-[30.800px] font-bold text-black">Acoustic Noise Canceler</Label>
      <Label className="top-[72px] left-[444px] -translate-x-1/2 -translate-y-1/2 text-[#e60000]">Acoustic</Label>
      <Label className="top-[101px] left-[444px] -translate-x-1/2 -translate-y-1/2 text-[#e60000]">Environment</Label>
      <Label className="top-[235px] left-[81px] -translate-x-1/2 -translate-y-1/2">Filter Select</Label>
      <Label className="top-[345px] left-[213px] -translate-x-1/2 -translate-y-1/2">Enable</Label>
      <Label className="top-[532px] left-[279px] -translate-x-1/2 -translate-y-1/2">Reset</Label>
      <Label className="top-[457px] left-[851px] -translate-x-1/2 -translate-y-1/2">Slow Adapt</Label>
      <Label className="top-[587px] left-[846px] -translate-x-1/2 -translate-y-1/2">Fast Adapt</Label>
      <Label className="top-[589px] left-[1268px] -translate-y-1/2">Copyright 2007-2023 The MathWorks, Inc.</Label>

      <Label className="top-[147px] left-[521px] -translate-x-full -translate-y-1/2 text-[20px]">Exterior Mic</Label>
      <Label className="top-[170px] left-[369px] -translate-y-1/2 text-[20px]">Filter</Label>
      <Label className="top-[192px] left-[521px] -translate-x-full -translate-y-1/2 text-[20px]">Pilot's Mic</Label>

      <Label className="top-[148px] left-[721px] -translate-y-1/2">Input</Label>
      <Label className="top-[192px] left-[721px] -translate-y-1/2">Desired</Label>
      <Label className="top-[236px] left-[721px] -translate-y-1/2">Step-size</Label>
      <Label className="top-[280px] left-[721px] -translate-y-1/2">Adapt</Label>
      <Label className="top-[324px] left-[721px] -translate-y-1/2">Reset</Label>
      <Label className="top-[170px] left-[1004px] -translate-x-full -translate-y-1/2">Output</Label>
      <Label className="top-[236px] left-[1004px] -translate-x-full -translate-y-1/2">Error</Label>
      <Label className="top-[302px] left-[1004px] -translate-x-full -translate-y-1/2">Wts</Label>
      <Label className="top-[223px] left-[861px] -translate-x-1/2 -translate-y-1/2">Normalized</Label>
      <Label className="top-[250px] left-[861px] -translate-x-1/2 -translate-y-1/2">LMS</Label>
      <Label className="top-[294px] left-[1212px] -translate-x-1/2 -translate-y-1/2">32</Label>

      <Label className="top-[412px] left-[1238px] -translate-y-1/2 text-[19.500px]">signal1</Label>
      <Label className="top-[468px] left-[1238px] -translate-y-1/2 text-[19.500px]">signal2</Label>
      <Label className="top-[446px] left-[1532px] -translate-x-full -translate-y-1/2 text-[19.500px]">pesqVal</Label>
      <Label className="top-[471px] left-[1385px] -translate-x-1/2 -translate-y-1/2 text-[22.700px]">calculatePESQ</Label>
    </div>
  );
}

export default function App() {
  return (
    <div className="flex h-[1004px] w-[1919px] flex-col overflow-hidden bg-[#f0f0f0] font-['Noto_Sans','Liberation_Sans',sans-serif]">
      {/* Title bar */}
      <div className="flex h-[34px] items-center bg-[#f3f3f3]">
        <div className="ml-[2px]"><ModelIcon size={25} /></div>
        <span className="ml-[7px] text-[17px] text-[#7c7c7c]">NLMS_with_PESQ - Simulink academic use</span>
        <div className="mr-[28px] ml-auto flex items-center">
          <div className="h-px w-[15px] bg-[#8a8a8a]" />
          <svg width="15" height="15" viewBox="0 0 15 15" className="ml-[54px]">
            <rect x="0.500" y="3" width="11" height="11.500" rx="1.500" fill="none" stroke="#777" />
            <path d="M3 3V1.500C3 1 3.500 .5 4 .5h9c1 0 1.500.5 1.500 1.500v9c0 .5-.5 1-1 1H12" fill="none" stroke="#777" />
          </svg>
          <svg width="15" height="15" viewBox="0 0 15 15" className="ml-[56px]">
            <path d="M.5.5l14 14M14.500.5l-14 14" stroke="#777" strokeWidth="1" />
          </svg>
        </div>
      </div>

      {/* Tabs */}
      <div className="flex h-[42px] bg-[#004072] text-[15.5px] text-white">
        <div className="mt-[5px] ml-[5px] flex h-[37px] w-[150px] items-center justify-center rounded-t-[3px] bg-[#f5f5f5] text-[#333333]">SIMULATION</div>
        <div className="ml-[5px] flex w-[158px] items-center justify-center pt-[5px]">DEBUG</div>
        <div className="flex w-[159px] items-center justify-center pt-[5px]">MODELING</div>
        <div className="flex w-[159px] items-center justify-center pt-[5px]">FORMAT</div>
        <div className="flex w-[160px] items-center justify-center pt-[5px]">APPS</div>
        <QuickAccess />
      </div>

      <Ribbon />

      {/* Workspace */}
      <div className="flex h-[761px]">
        <div className="flex w-[1880px] flex-col border-2 border-[#3a78ad]">
          <div className="flex h-[27px] items-center bg-[#f0f0f0]">
            <svg width="120" height="22" viewBox="0 0 120 22" className="ml-[10px]">
              <path d="M1 11L11 3v4h9v8h-9v4z" fill="#e4e4e4" stroke="#d2d2d2" />
              <path d="M62 11l-10-8v4h-9v8h9v4z" fill="#e4e4e4" stroke="#d2d2d2" />
              <path d="M97 1l9 9h-4v11h-10V10h-4z" fill="#e4e4e4" stroke="#d2d2d2" />
            </svg>
            <div className="mt-px flex h-[26px] w-[146px] items-center justify-center bg-white pt-px text-[15.5px] text-[#222222]">NLMS_with_PESQ</div>
            <svg width="24" height="14" viewBox="0 0 24 14" className="mr-[9px] ml-auto">
              <rect x="0.500" y="0.500" width="23" height="13" fill="#e8e8e8" stroke="#999" />
              <path d="M3 4h18M3 7h18M6 10.500h12" stroke="#888" strokeWidth="1.500" strokeDasharray="2 1" />
            </svg>
          </div>
          <div className="h-[2px] bg-[#8a8f99]" />
          <div className="flex flex-1">
            <Sidebar />
            <div className="flex w-[1825px] flex-col">
              <div className="flex h-[43px] items-center bg-[#f0f0f0] pr-[5px] pl-[3px]">
                <div className="flex h-[36px] flex-1 items-center bg-white">
                  <div className="flex h-[23px] w-[23px] items-center justify-center border border-[#7c7c7c] bg-[#ececec]"><ModelIcon size={18} /></div>
                  <span className="ml-[4px] text-[16.800px] text-[#222222]">NLMS_with_PESQ</span>
                  <svg width="8" height="14" viewBox="0 0 8 14" className="ml-[9px]"><path d="M0 0l8 7-8 7z" fill="#000" /></svg>
                  <svg width="14" height="8" viewBox="0 0 14 8" className="mr-[4px] ml-auto"><path d="M0 0h14L7 8z" fill="#000" /></svg>
                </div>
              </div>
              <div className="h-[2px] bg-[#8a8f99]" />
              <Diagram />
            </div>
          </div>
        </div>
        <div className="flex w-[39px] justify-end pt-[3px]">
          <div className="h-[152px] w-[31px] rounded-l-[2px] border border-[#d4d4d4] bg-white pt-[10px] pr-[5px] text-[15px] leading-[20px] text-[#222222] [writing-mode:vertical-rl]">Property Inspector</div>
        </div>
      </div>

      {/* Status bar */}
      <div className="relative flex h-[29px] items-center justify-between bg-[#f0f0f0] px-[6px] pt-[5px] text-[16.750px] text-[#333333]">
        <span>Ready</span>
        <span className="absolute left-[976px]">147%</span>
        <span className="text-[#0a5fb4]">FixedStepDiscrete</span>
      </div>
    </div>
  );
}
